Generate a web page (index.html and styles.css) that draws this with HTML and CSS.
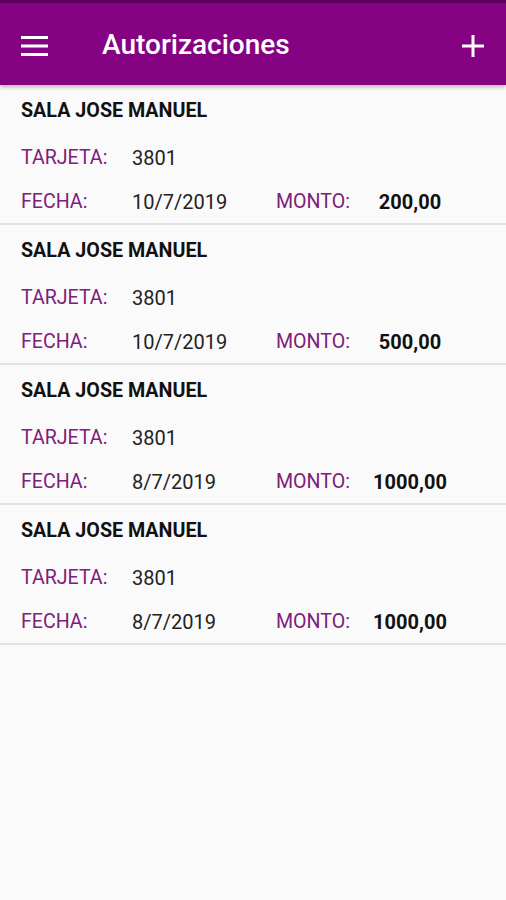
FILE: index.html
```html
<!DOCTYPE html>
<html lang="es">
<head>
<meta charset="utf-8">
<title>Autorizaciones</title>
<link rel="stylesheet" href="styles.css">
</head>
<body>
<header class="appbar">
  <div class="appbar-inner">
    <svg class="icon-menu" width="28" height="20" viewBox="0 0 28 20"><rect x="0" y="0" width="27" height="3" fill="#fff"/><rect x="0" y="8.5" width="27" height="3" fill="#fff"/><rect x="0" y="17" width="27" height="3" fill="#fff"/></svg>
    <h1 class="title">Autorizaciones</h1>
    <svg class="icon-plus" width="22" height="22" viewBox="0 0 22 22"><rect x="9.5" y="0" width="3" height="22" fill="#fff"/><rect x="0" y="9.5" width="22" height="3" fill="#fff"/></svg>
  </div>
</header>
<main class="list">
  <section class="card">
    <div class="name">SALA JOSE MANUEL</div>
    <div class="row row-card"><span class="label">TARJETA:</span><span class="value">3801</span></div>
    <div class="row row-date"><span class="label">FECHA:</span><span class="value">10/7/2019</span><span class="label label-monto">MONTO:</span><span class="amount">200,00</span></div>
  </section>
  <section class="card">
    <div class="name">SALA JOSE MANUEL</div>
    <div class="row row-card"><span class="label">TARJETA:</span><span class="value">3801</span></div>
    <div class="row row-date"><span class="label">FECHA:</span><span class="value">10/7/2019</span><span class="label label-monto">MONTO:</span><span class="amount">500,00</span></div>
  </section>
  <section class="card">
    <div class="name">SALA JOSE MANUEL</div>
    <div class="row row-card"><span class="label">TARJETA:</span><span class="value">3801</span></div>
    <div class="row row-date"><span class="label">FECHA:</span><span class="value">8/7/2019</span><span class="label label-monto">MONTO:</span><span class="amount">1000,00</span></div>
  </section>
  <section class="card">
    <div class="name">SALA JOSE MANUEL</div>
    <div class="row row-card"><span class="label">TARJETA:</span><span class="value">3801</span></div>
    <div class="row row-date"><span class="label">FECHA:</span><span class="value">8/7/2019</span><span class="label label-monto">MONTO:</span><span class="amount">1000,00</span></div>
  </section>
</main>
</body>
</html>
```
FILE: styles.css
```css
html, body {
  margin: 0;
  padding: 0;
}
body {
  background: #fafafa;
  font-family: Roboto, "Noto Sans", sans-serif;
  width: 506px;
  height: 900px;
  overflow: hidden;
}
.appbar {
  background: #850383;
  border-top: 3px solid #5c005a;
  height: 82px;
  box-shadow: 0 2px 4px rgba(0,0,0,0.28);
  position: relative;
  z-index: 1;
}
.appbar-inner {
  display: flex;
  align-items: center;
  height: 100%;
  padding: 0 22px 0 21px;
}
.icon-menu {
  display: block;
  margin-top: 4px;
}
.title {
  margin: 2px 0 0 53px;
  flex: 1;
  color: #fff;
  font-weight: 500;
  font-size: 28px;
  line-height: 34px;
}
.icon-plus {
  display: block;
  margin-top: 3px;
}
.list {
  display: flex;
  flex-direction: column;
}
.card {
  padding: 14px 0 9px 21px;
  border-bottom: 2px solid #e2e2e2;
  height: 115px;
}
.name {
  font-weight: 700;
  font-size: 19.7px;
  line-height: 24px;
  color: #111;
}
.row {
  display: flex;
  align-items: center;
  height: 24px;
  font-size: 20px;
  line-height: 24px;
}
.row-card {
  margin-top: 23px;
}
.row-date {
  margin-top: 20px;
}
.label {
  color: #7d2079;
  width: 111px;
  font-size: 19.6px;
}
.value {
  color: #222;
  width: 144px;
}
.label-monto {
  width: 84px;
}
.amount {
  width: 100px;
  text-align: center;
  font-weight: 700;
  color: #111;
}
```
